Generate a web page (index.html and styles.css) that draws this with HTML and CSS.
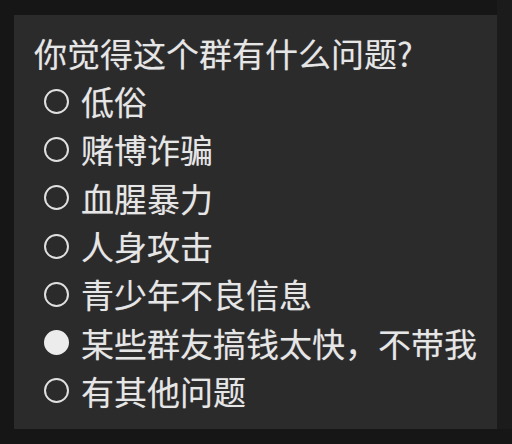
FILE: index.html
```html
<!DOCTYPE html>
<html lang="zh-CN">
<head>
<meta charset="utf-8">
<link rel="stylesheet" href="styles.css">
</head>
<body>
<div class="screen">
  <div class="panel">
    <div class="title">你觉得这个群有什么问题?</div>
    <ul class="options">
      <li class="opt"><span class="radio"></span><span class="label">低俗</span></li>
      <li class="opt"><span class="radio"></span><span class="label">赌博诈骗</span></li>
      <li class="opt"><span class="radio"></span><span class="label">血腥暴力</span></li>
      <li class="opt"><span class="radio"></span><span class="label">人身攻击</span></li>
      <li class="opt"><span class="radio"></span><span class="label">青少年不良信息</span></li>
      <li class="opt"><span class="radio checked"></span><span class="label">某些群友搞钱太快，不带我</span></li>
      <li class="opt"><span class="radio"></span><span class="label">有其他问题</span></li>
    </ul>
  </div>
  <div class="strip"></div>
</div>
</body>
</html>
```
FILE: styles.css
```css
html, body {
  margin: 0;
  padding: 0;
  background: #161616;
}
.screen {
  width: 512px;
  height: 444px;
  display: flex;
  align-items: flex-start;
  padding-top: 15px;
  padding-left: 14px;
  box-sizing: border-box;
}
.panel {
  width: 483px;
  height: 414px;
  background: #2b2b2b;
  box-sizing: border-box;
  padding: 14px 0 0 20px;
  font-family: "Noto Sans CJK SC", "Noto Sans", sans-serif;
  color: #e6e6e6;
  text-shadow: 0 0 1px rgba(230,230,230,0.35);
}
.strip {
  width: 15px;
  height: 429px;
  margin-top: -15px;
  background: #1b1b1b;
}
.title {
  font-size: 33px;
  line-height: 48px;
  height: 48px;
}
.options {
  list-style: none;
  margin: 0;
  padding: 0;
}
.opt {
  display: flex;
  align-items: center;
  height: 48.3px;
  font-size: 33px;
}
.radio {
  width: 21px;
  height: 21px;
  border: 2.5px solid #e0e0e0;
  border-radius: 50%;
  margin-left: 10px;
  margin-right: 12px;
  flex: none;
}
.radio.checked {
  background: #ececec;
  border-color: #ececec;
}
.label {
  line-height: 48px;
}
```
